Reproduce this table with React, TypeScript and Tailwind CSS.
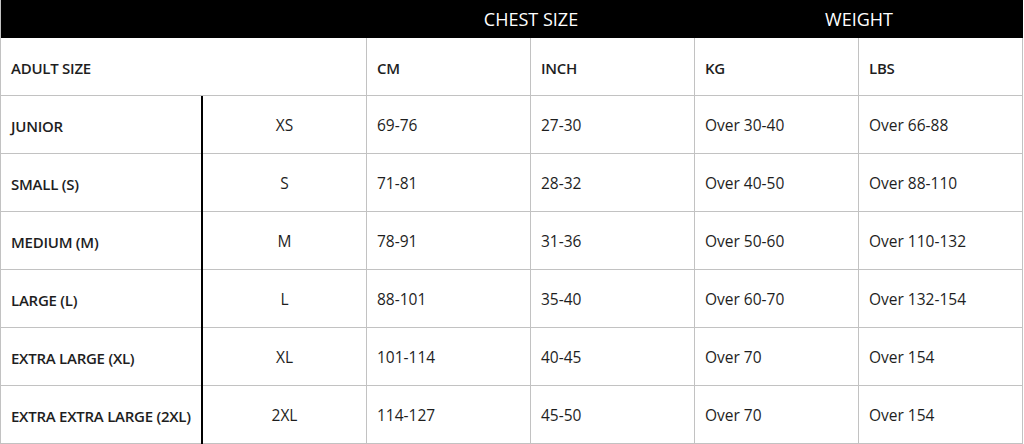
import React from 'react';

const rows = [
  { name: 'JUNIOR', size: 'XS', cm: '69-76', inch: '27-30', kg: 'Over 30-40', lbs: 'Over 66-88' },
  { name: 'SMALL (S)', size: 'S', cm: '71-81', inch: '28-32', kg: 'Over 40-50', lbs: 'Over 88-110' },
  { name: 'MEDIUM (M)', size: 'M', cm: '78-91', inch: '31-36', kg: 'Over 50-60', lbs: 'Over 110-132' },
  { name: 'LARGE (L)', size: 'L', cm: '88-101', inch: '35-40', kg: 'Over 60-70', lbs: 'Over 132-154' },
  { name: 'EXTRA LARGE (XL)', size: 'XL', cm: '101-114', inch: '40-45', kg: 'Over 70', lbs: 'Over 154' },
  { name: 'EXTRA EXTRA LARGE (2XL)', size: '2XL', cm: '114-127', inch: '45-50', kg: 'Over 70', lbs: 'Over 154' },
];

const cell = 'h-[58px] flex items-center pt-[3px] px-[10px] border-r border-b border-[#c2c2c2]';
const label = 'font-semibold text-[15px] tracking-[-0.25px]';

export default function App() {
  return (
    <div
      className="w-[1024px] h-[444px] bg-white text-[#1e1e1e] text-[15.5px] overflow-hidden"
      style={{ fontFamily: '"Open Sans", "Noto Sans", sans-serif' }}
    >
      <div className="grid grid-cols-[202px_164px_164px_164px_164px_164px] w-[1022px] border-l border-[#c2c2c2]">
        {/* black header */}
        <div className="col-span-2 h-[38px] bg-black" />
        <div className="col-span-2 h-[38px] bg-black text-white text-[18px] flex items-center justify-center">
          CHEST SIZE
        </div>
        <div className="col-span-2 h-[38px] bg-black text-white text-[18px] flex items-center justify-center">
          WEIGHT
        </div>

        {/* unit row */}
        <div className={`col-span-2 ${label} ${cell}`}>ADULT SIZE</div>
        <div className={`${label} ${cell}`}>CM</div>
        <div className={`${label} ${cell}`}>INCH</div>
        <div className={`${label} ${cell}`}>KG</div>
        <div className={`${label} ${cell}`}>LBS</div>

        {rows.map((r) => (
          <React.Fragment key={r.name}>
            <div className={`h-[58px] flex items-center pl-[10px] border-b border-[#c2c2c2] whitespace-nowrap ${label}`}>
              <span className="mr-auto pt-[3px]">{r.name}</span>
              <span className="w-[2px] self-stretch bg-black -mb-px" />
            </div>
            <div className={`justify-center ${cell}`}>{r.size}</div>
            <div className={cell}>{r.cm}</div>
            <div className={cell}>{r.inch}</div>
            <div className={cell}>{r.kg}</div>
            <div className={cell}>{r.lbs}</div>
          </React.Fragment>
        ))}
      </div>
    </div>
  );
}
